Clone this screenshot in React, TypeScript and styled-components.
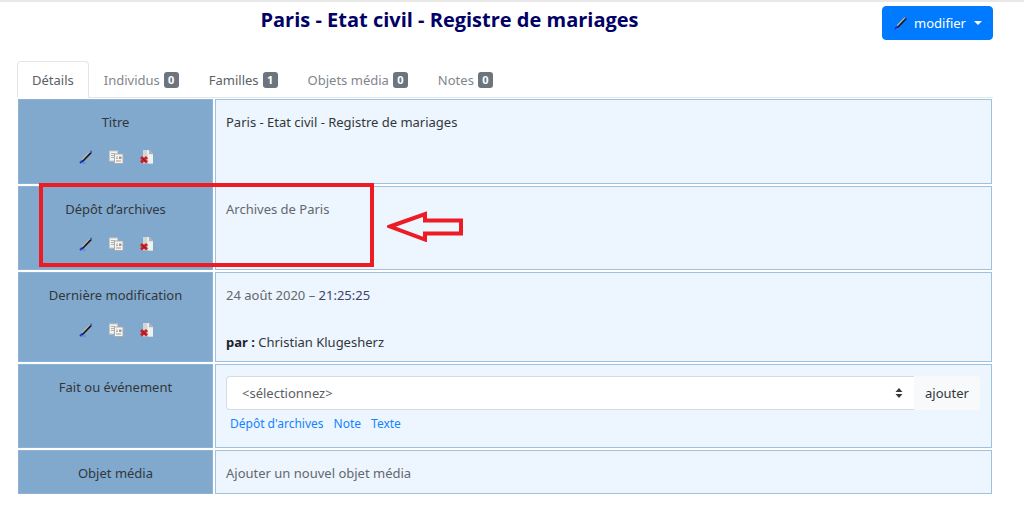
import React from "react";
import styled, { createGlobalStyle } from "styled-components";

const GlobalStyle = createGlobalStyle`
  *, *::before, *::after { box-sizing: border-box; }
  body {
    margin: 0;
    background: #fff;
    color: #32373c;
    font: 13px/20px "Noto Sans", "Open Sans", sans-serif;
  }
  button, select { font: inherit; }
`;

const Page = styled.main`
  border-top: 2px solid #e8e8e8;
  padding: 4px 31px 24px 17px;
`;

const Header = styled.header`
  display: flex;
  align-items: flex-start;
  margin-bottom: 21px;
`;

const Title = styled.h1`
  flex: 1;
  margin: 0;
  font-family: "Open Sans", "Noto Sans", sans-serif;
  font-size: 20px;
  line-height: 28px;
  font-weight: 700;
  text-align: center;
  color: #000066;
`;

const EditButton = styled.button`
  display: flex;
  align-items: center;
  justify-content: center;
  gap: 5px;
  min-width: 111px;
  height: 34px;
  padding: 0 10px;
  border: 1px solid #007bff;
  border-radius: 4px;
  background: #007bff;
  color: #fff;
  cursor: pointer;
`;

const Caret = styled.span`
  margin-left: 3px;
  border: 4px solid transparent;
  border-top-color: #fff;
  border-bottom: 0;
`;

const Tabs = styled.nav`
  display: flex;
  border-bottom: 1px solid #e3e6e9;
`;

const Tab = styled.a<{ $active?: boolean; $strong?: boolean }>`
  display: flex;
  align-items: center;
  gap: 4px;
  height: 37px;
  margin-bottom: -1px;
  padding: 0 14px;
  border: 1px solid ${(p) => (p.$active ? "#e3e6e9" : "transparent")};
  border-bottom-color: ${(p) => (p.$active ? "#fff" : "transparent")};
  border-radius: 4px 4px 0 0;
  color: ${(p) => (p.$active || p.$strong ? "#5a6066" : "#80868c")};
  text-decoration: none;
`;

const Badge = styled.span`
  min-width: 15px;
  padding: 0 4px;
  border-radius: 3px;
  background: #6c757d;
  color: #fff;
  font-size: 11px;
  line-height: 16px;
  font-weight: 700;
  text-align: center;
`;

const Sheet = styled.div`
  position: relative;
  margin: 0 -1px;
`;

const Facts = styled.table`
  width: 100%;
  table-layout: fixed;
  border-collapse: separate;
  border-spacing: 2px;
  margin-top: -1px;
`;

const Row = styled.tr<{ $height: number }>`
  height: ${(p) => p.$height}px;
  vertical-align: top;
`;

const LabelColumn = styled.col`
  width: 195px;
`;

const Label = styled.th`
  padding: 12px 8px 0;
  border: 1px solid #8eb2d3;
  background: #81a9cd;
  font-weight: 400;
  text-align: center;
`;

const Value = styled.td<{ $muted?: boolean }>`
  padding: 12px 11px 0 10px;
  border: 1px solid #9fc1dc;
  background: #edf5fe;
  color: ${(p) => (p.$muted ? "#62686d" : "#32373c")};
`;

const FormValue = styled(Value)`
  padding-top: 11px;
`;

const Actions = styled.div`
  display: flex;
  justify-content: center;
  gap: 14px;
  margin-top: 17px;
`;

const IconButton = styled.button`
  display: block;
  width: 16px;
  height: 16px;
  padding: 0;
  border: 0;
  background: none;
  cursor: pointer;
  svg { display: block; }
`;

const Time = styled.span`
  color: #41416f;
`;

const Author = styled.p`
  margin: 27px 0 0;
  color: #32373c;
  b { color: #212529; }
`;

const InputGroup = styled.div`
  display: flex;
  height: 34px;
`;

const SelectBox = styled.div`
  position: relative;
  flex: 1;
  svg {
    position: absolute;
    right: 11px;
    top: 12px;
    pointer-events: none;
  }
`;

const Select = styled.select`
  width: 100%;
  height: 100%;
  padding: 0 28px 0 15px;
  border: 1px solid #d5dbe1;
  border-right: 0;
  border-radius: 4px 0 0 4px;
  appearance: none;
  background: #fff;
  color: #5a6066;
`;

const AddButton = styled.button`
  width: 66px;
  padding: 0;
  border: 0;
  border-radius: 0 4px 4px 0;
  background: #f8f9fa;
  color: #32373c;
  cursor: pointer;
`;

const QuickLinks = styled.div`
  display: flex;
  gap: 10px;
  padding: 4px 4px 0;
  font-size: 12px;
  a { color: #1284ff; text-decoration: none; }
`;

const Highlight = styled.div`
  position: absolute;
  left: 23px;
  top: 86px;
  width: 335px;
  height: 84px;
  border: 4px solid #ed1c24;
  pointer-events: none;
`;

const Arrow = styled.svg`
  position: absolute;
  left: 371px;
  top: 113px;
  pointer-events: none;
`;

const PenIcon = () => (
  <svg width="16" height="16" viewBox="0 0 16 16" aria-hidden="true">
    <path d="M4.500 11 12.200 3" stroke="#bdb6ac" strokeWidth="2.2" fill="none" />
    <path d="M4 13 13.300 3.400" stroke="#15151f" strokeWidth="1.6" fill="none" />
    <path d="M12 3.400 13.800 1.800" stroke="#3f5bd0" strokeWidth="1.3" fill="none" />
    <path d="M2 14 4.200 11.900" stroke="#1d2be0" strokeWidth="1.8" fill="none" />
    <path d="M3 14h5" stroke="#4f78e0" strokeWidth="0.8" fill="none" />
  </svg>
);

const CopyIcon = () => (
  <svg width="16" height="16" viewBox="0 0 16 16" aria-hidden="true">
    <rect x="1.500" y="2" width="8" height="10" fill="#f2f2f0" stroke="#c8c8c4" />
    <path d="M3 4.500h4M3 6.500h3M3 8.500h3" stroke="#b0b0b0" />
    <rect x="6.500" y="5" width="8.500" height="9.500" fill="#f6f6f4" stroke="#acaca8" />
    <path d="M8 8h2M8 9.500h2" stroke="#b0b0b0" />
    <rect x="11" y="7.500" width="2.500" height="2.500" fill="#9a9a9a" />
    <path d="M8 12h5" stroke="#9a9a9a" />
  </svg>
);

const DeleteIcon = () => (
  <svg width="16" height="16" viewBox="0 0 16 16" aria-hidden="true">
    <path d="M5 1h6l4 4v9.500H5z" fill="#d3d6d4" />
    <path d="M9 1.500 11 1v4.500h4v9h-4.500z" fill="#f0f1ed" />
    <path d="M11 1v4h4z" fill="#a9b2b8" />
    <path d="m3 8.200 6 5.200M9 8.200 3 13.400" stroke="#c9202a" strokeWidth="3" fill="none" />
    <path d="m4.500 9.600 3 2.600" stroke="#8e1018" strokeWidth="1" fill="none" />
  </svg>
);

const SortIcon = () => (
  <svg width="8" height="10" viewBox="0 0 8 10" aria-hidden="true">
    <path d="M4 0 7.500 4h-7zM4 10 .5 6h7z" fill="#343a40" />
  </svg>
);

const tabs = [
  { label: "Détails", active: true },
  { label: "Individus", count: 0 },
  { label: "Familles", count: 1, strong: true },
  { label: "Objets média", count: 0 },
  { label: "Notes", count: 0 },
];

const RowActions = () => (
  <Actions>
    <IconButton type="button" aria-label="Modifier"><PenIcon /></IconButton>
    <IconButton type="button" aria-label="Copier"><CopyIcon /></IconButton>
    <IconButton type="button" aria-label="Supprimer"><DeleteIcon /></IconButton>
  </Actions>
);

export default function App() {
  return (
    <>
      <GlobalStyle />
      <Page>
        <Header>
          <Title>Paris - Etat civil - Registre de mariages</Title>
          <EditButton type="button">
            <PenIcon />
            modifier
            <Caret />
          </EditButton>
        </Header>
        <Tabs>
          {tabs.map((t) => (
            <Tab key={t.label} href="#" $active={t.active} $strong={t.strong}>
              {t.label}
              {t.count !== undefined && <Badge>{t.count}</Badge>}
            </Tab>
          ))}
        </Tabs>
        <Sheet>
          <Facts>
            <colgroup>
              <LabelColumn />
              <col />
            </colgroup>
            <tbody>
              <Row $height={85}>
                <Label scope="row">Titre<RowActions /></Label>
                <Value>Paris - Etat civil - Registre de mariages</Value>
              </Row>
              <Row $height={84}>
                <Label scope="row">Dépôt d’archives<RowActions /></Label>
                <Value $muted>Archives de Paris</Value>
              </Row>
              <Row $height={90}>
                <Label scope="row">Dernière modification<RowActions /></Label>
                <Value $muted>
                  24 août 2020 – <Time>21:25:25</Time>
                  <Author><b>par :</b> Christian Klugesherz</Author>
                </Value>
              </Row>
              <Row $height={84}>
                <Label scope="row"><label htmlFor="fact">Fait ou événement</label></Label>
                <FormValue>
                  <InputGroup>
                    <SelectBox>
                      <Select id="fact">
                        <option>&lt;sélectionnez&gt;</option>
                      </Select>
                      <SortIcon />
                    </SelectBox>
                    <AddButton type="button">ajouter</AddButton>
                  </InputGroup>
                  <QuickLinks>
                    <a href="#">Dépôt d'archives</a>
                    <a href="#">Note</a>
                    <a href="#">Texte</a>
                  </QuickLinks>
                </FormValue>
              </Row>
              <Row $height={44}>
                <Label scope="row">Objet média</Label>
                <Value $muted>Ajouter un nouvel objet média</Value>
              </Row>
            </tbody>
          </Facts>
          <Highlight />
          <Arrow width="77" height="32" viewBox="0 0 77 32" aria-hidden="true">
            <path d="M3 16.500 38 4v6.500h36v13H38v6z" fill="none" stroke="#ed1c24" strokeWidth="4" />
          </Arrow>
        </Sheet>
      </Page>
    </>
  );
}
